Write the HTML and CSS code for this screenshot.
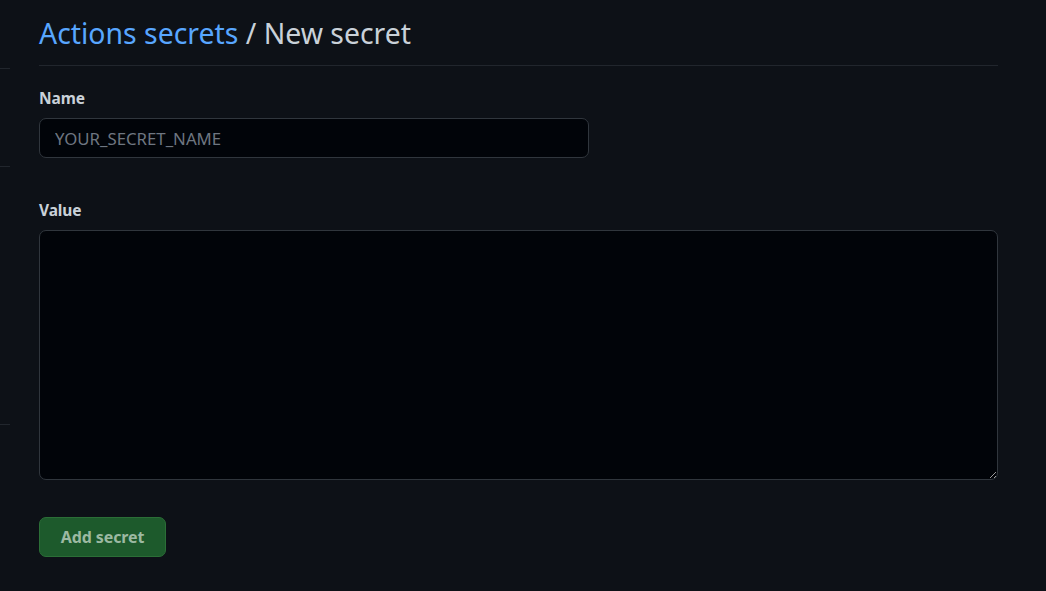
FILE: index.html
```html
<!DOCTYPE html>
<html>
<head>
<meta charset="utf-8">
<link rel="stylesheet" href="styles.css">
</head>
<body>
<div class="page">
  <aside class="sidebar">
    <div class="side-line l1"></div>
    <div class="side-line l2"></div>
    <div class="side-line l3"></div>
  </aside>
  <main class="main">
    <div class="subhead">
      <h2 class="subhead-heading"><a class="crumb" href="#">Actions secrets</a> / New secret</h2>
    </div>
    <form class="form">
      <div class="group">
        <label class="label" for="name">Name</label>
        <input id="name" class="input" type="text" placeholder="YOUR_SECRET_NAME">
      </div>
      <div class="group value-group">
        <label class="label" for="val">Value</label>
        <textarea id="val" class="textarea"></textarea>
      </div>
      <button type="button" class="btn">Add secret</button>
    </form>
  </main>
</div>
</body>
</html>
```

FILE: styles.css
```css
* { box-sizing: border-box; }
html, body { margin: 0; padding: 0; }
body {
  background: #0d1117;
  font-family: "Noto Sans", "Liberation Sans", sans-serif;
  color: #c9d1d9;
  width: 1046px;
  height: 591px;
  overflow: hidden;
}
.page { display: flex; }
.sidebar { width: 39px; position: relative; flex: none; }
.side-line { position: absolute; left: 0; width: 10px; height: 1px; background: #21262d; }
.l1 { top: 68px; }
.l2 { top: 166px; }
.l3 { top: 424px; }
.main { width: 959px; padding-top: 12px; }
.subhead { border-bottom: 1px solid #21262d; padding-bottom: 11px; }
.subhead-heading {
  margin: 0;
  font-size: 28.4px;
  font-weight: 400;
  line-height: 42px;
  color: #c9d1d9;
}
.crumb { color: #58a6ff; text-decoration: none; }
.form { padding-top: 21px; }
.group { display: flex; flex-direction: column; }
.label {
  font-size: 15.5px;
  font-weight: 700;
  color: #c9d1d9;
  line-height: 22px;
  margin-bottom: 9px;
  letter-spacing: -0.1px;
}
.input {
  width: 550px;
  height: 40px;
  background: #010409;
  border: 1px solid #30363d;
  border-radius: 7px;
  padding: 0 15px;
  font-family: "Noto Sans", sans-serif;
  font-size: 16.8px;
  color: #c9d1d9;
  outline: none;
}
.input::placeholder { color: #6e7681; }
.value-group { margin-top: 41px; }
.textarea {
  width: 959px;
  height: 250px;
  background: #010409;
  border: 1px solid #30363d;
  border-radius: 7px;
  resize: both;
  outline: none;
  color: #c9d1d9;
}
.btn {
  margin-top: 37px;
  width: 127px;
  height: 40px;
  background: #1d5a2c;
  border: 1px solid #2b6e37;
  border-radius: 7px;
  color: #9cb9a2;
  font-family: "Noto Sans", sans-serif;
  font-size: 16px;
  font-weight: 700;
  letter-spacing: -0.1px;
}
```
